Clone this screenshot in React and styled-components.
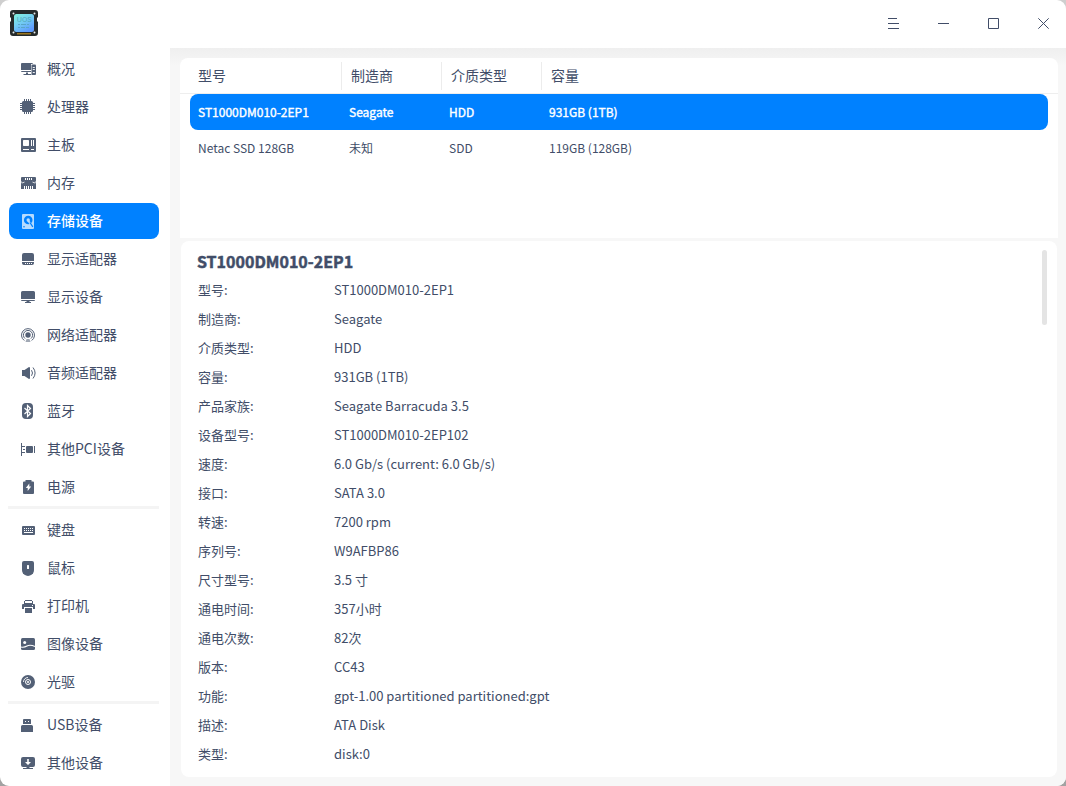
import React from 'react';
import styled, { createGlobalStyle, css } from 'styled-components';

const Global = createGlobalStyle`
  * { box-sizing: border-box; }
  html, body { margin: 0; padding: 0; }
  body {
    background: linear-gradient(#cfcfcf, #a2a2a2);
    font-family: "Noto Sans CJK SC", "Noto Sans", sans-serif;
    color: #414d68;
    overflow: hidden;
  }
`;

const Window = styled.div`
  width: 1066px;
  height: 786px;
  display: flex;
  flex-direction: column;
  background: #fff;
  border-radius: 9px;
  overflow: hidden;
`;

const TitleBar = styled.header`
  height: 48px;
  flex: none;
  display: flex;
  align-items: center;
  justify-content: space-between;
  padding: 0 16px 2px 8px;
`;

const Controls = styled.div`
  display: flex;
  gap: 37px;
`;

const ControlIcon = styled.svg`
  display: block;
  width: 13px;
  height: 13px;
  fill: none;
  stroke: #414d68;
  stroke-width: 1;
`;

const Body = styled.div`
  flex: 1;
  min-height: 0;
  display: flex;
`;

const Sidebar = styled.nav`
  width: 170px;
  flex: none;
  padding: 3px 11px 0 9px;
  display: flex;
  flex-direction: column;
  gap: 2px;
`;

const NavItem = styled.div`
  height: 36px;
  flex: none;
  display: flex;
  align-items: center;
  gap: 11px;
  padding-left: 11px;
  border-radius: 8px;
  font-size: 14px;
  line-height: 20px;
  white-space: nowrap;
  color: ${(p) => (p.$active ? '#fff' : '#414d68')};
  background: ${(p) => (p.$active ? '#0081ff' : 'transparent')};
  font-weight: ${(p) => (p.$active ? 500 : 400)};
`;

const NavLabel = styled.span`
  padding-bottom: 2px;
`;

const NavIcon = styled.svg`
  width: 16px;
  height: 16px;
  flex: none;
  --ink: ${(p) => (p.$active ? '#b5dbff' : '#536076')};
  --hole: ${(p) => (p.$active ? '#0081ff' : '#fff')};
  fill: var(--ink);
  .hole { fill: var(--hole); }
  .line { fill: none; stroke: var(--ink); }
  .cut { fill: none; stroke: var(--hole); }
`;

const Divider = styled.hr`
  width: 151px;
  height: 3px;
  flex: none;
  margin: -1px 0 1px -1px;
  border: 0;
  background: #f4f4f4;
`;

const Content = styled.main`
  flex: 1;
  min-width: 0;
  display: flex;
  flex-direction: column;
  gap: 3px;
  padding: 10px 8px 9px 10px;
  background: linear-gradient(#efefef, #f7f7f7 18px);
`;

const TableCard = styled.section`
  height: 180px;
  flex: none;
  background: #fff;
  border-radius: 8px 8px 0 0;
`;

const columns = css`
  display: grid;
  align-items: center;
`;

const HeadRow = styled.div`
  ${columns}
  grid-template-columns: 162px 100px 100px 1fr;
  height: 36px;
  border-bottom: 1px solid #eee;
`;

const HeadCell = styled.div`
  height: 28px;
  line-height: 26px;
  padding-left: ${(p) => (p.$first ? 18 : 9)}px;
  border-left: ${(p) => (p.$first ? 0 : 1)}px solid #ececec;
  margin-left: ${(p) => (p.$first ? 0 : -1)}px;
  font-size: 14px;
`;

const Row = styled.div`
  ${columns}
  grid-template-columns: 151px 100px 100px 1fr;
  height: 36px;
  margin: 0 10px;
  padding-left: 8px;
  border-radius: 8px;
  font-size: 12px;
  line-height: 18px;
  color: ${(p) => (p.$active ? '#fff' : '#414d68')};
  background: ${(p) => (p.$active ? '#0081ff' : 'transparent')};
  -webkit-text-stroke: ${(p) => (p.$active ? '0.4px #fff' : '0')};
`;

const DetailCard = styled.section`
  flex: 1;
  margin: 0 1px;
  padding: 9px 10px 0 16px;
  background: #fff;
  border-radius: 8px;
  display: flex;
  justify-content: space-between;
`;

const DetailTitle = styled.h1`
  margin: 0 0 3px;
  font-size: 16px;
  line-height: 22px;
  font-weight: 700;
  -webkit-text-stroke: 0.5px #414d68;
`;

const DetailList = styled.dl`
  margin: 0 0 0 1px;
`;

const DetailRow = styled.div`
  display: grid;
  grid-template-columns: 136px 1fr;
  height: 29px;
  font-size: 13px;
  line-height: 29px;
  white-space: nowrap;
`;

const Label = styled.dt``;

const Value = styled.dd`
  margin: 0;
`;

const ScrollThumb = styled.div`
  width: 5.5px;
  height: 75px;
  border-radius: 3px;
  background: #e4e4e4;
`;

const Logo = () => (
  <svg width="32" height="32" viewBox="0 0 32 32">
    <defs>
      <linearGradient id="chip" x1="0" y1="0" x2="0.6" y2="1">
        <stop offset="0" stopColor="#82f3dc" />
        <stop offset="0.5" stopColor="#74cff2" />
        <stop offset="1" stopColor="#5f9cff" />
      </linearGradient>
    </defs>
    <path d="M5 3h22q3 0 3 3v4l-1 1v3l1 1v11q0 3-3 3H5q-3 0-3-3V15l1-1v-3l-1-1V6q0-3 3-3z" fill="#252a2a" />
    <rect x="6" y="7" width="20" height="18" rx="2.5" fill="url(#chip)" />
    <rect x="9" y="26" width="14" height="1.500" fill="#9b7620" />
    <g fill="#e8eeee">
      <circle cx="5.5" cy="6.5" r="1" />
      <circle cx="26.5" cy="6.5" r="1" />
      <circle cx="5.5" cy="25.5" r="1" />
      <circle cx="26.5" cy="25.5" r="1" />
    </g>
    <text x="8.8" y="14.800" fontSize="6.400" textLength="15" lengthAdjust="spacingAndGlyphs" fill="#4fa5b5" fontFamily="Inter, sans-serif">UOS</text>
    <path d="M10 17.500h2m1 0h5m1 0h2M10 20.500h2m1 0h4m1 0h3" stroke="#58a6c9" strokeWidth="1" />
  </svg>
);

const glyphs = {
  overview: (
    <>
      <path d="M2 2h9.500q1.500 0 1.500 1h-2v6H1V3q0-1 1-1zM1 10h10v1H2q-1 0-1-1zM6 11.500h2V13h3v1H3.500v-1H6z" />
      <path d="M12.500 3.500h2.500q1 0 1 1V13q0 1-1 1h-3.500V4.500q0-1 1-1z" />
      <path className="cut" d="M12.800 6.500h2M12.800 8.500h2M12.800 11.500h2" strokeWidth=".9" />
    </>
  ),
  cpu: (
    <>
      <rect x="2" y="2" width="11" height="11" rx="1.5" />
      <path className="line" d="M4.5 0v15M6.5 0v15M8.5 0v15M10.5 0v15M0 4.5h15M0 6.5h15M0 8.5h15M0 10.5h15" />
    </>
  ),
  board: (
    <>
      <rect x="1" y="1" width="15" height="14" rx="1" />
      <rect className="hole" x="3" y="3" width="6" height="6" rx=".7" />
      <path className="cut" d="M11.5 3v6M13.5 3v6M3 12.5h6M11 12.5h3" />
    </>
  ),
  memory: (
    <>
      <path d="M2 2h13q1 0 1 1v3l-.5.5v1.500l.5.500V14H1V8.500l.5-.5V6.500L1 6V3q0-1 1-1z" />
      <path className="cut" d="M5.500 3v2M7.500 3v2M9.500 3v2M11.500 3v2M4.500 11v3M6.500 11v3M8.500 11v3M10.500 11v3M12.500 11v3" />
      <path className="cut" d="M2 8l2.500-.9M15 8l-2.500-.9" strokeWidth=".8" />
    </>
  ),
  disk: (
    <>
      <rect x="2" y="1" width="12" height="15" rx="1" />
      <circle className="hole" cx="8.200" cy="7" r="4.300" />
      <circle cx="8.200" cy="7" r="1.700" />
      <path d="M7.200 8l1.800-.7 4.500 6-1.500 1z" />
      <path className="cut" d="M10 9.500l2.800 4.300" strokeWidth="1.200" />
      <circle className="hole" cx="4" cy="13.700" r=".8" />
    </>
  ),
  gpu: (
    <>
      <path d="M4 2h8q2 0 2 2v6H2V4q0-2 2-2zM2 11h12v1q0 2-2 2H4q-2 0-2-2z" />
      <path className="cut" d="M5 12.500h1M7 12.500h1M9 12.500h1M11 12.500h1" />
    </>
  ),
  display: (
    <path d="M2.500 2h11Q15 2 15 3.500V10H1V3.500Q1 2 2.500 2zM1 11h14q0 1-1 1H9.500v1H11v1H5v-1h1.500v-1H2q-1 0-1-1z" />
  ),
  network: (
    <>
      <circle cx="8" cy="8" r="2.700" />
      <path className="line" d="M5.100 11.600a4.600 4.600 0 1 1 5.800 0M4.300 13.500a6.500 6.500 0 1 1 7.400 0" />
      <path d="M6.500 12h3l1 3h-5z" opacity=".55" />
    </>
  ),
  audio: (
    <>
      <path d="M2 5h2.500L9 2q1 0 1 1v10q0 1-1 1l-4.500-3H2z" />
      <path className="line" d="M11.500 5.200q2 2.800 0 5.600M13 2.500q4.200 5.500 0 11" />
    </>
  ),
  bluetooth: (
    <>
      <rect x="2" y="0" width="11" height="16" rx="4" />
      <path className="cut" d="M4.500 5l6 5.500-3 3v-11l3 3L4.500 11" strokeWidth="1.200" />
    </>
  ),
  pci: (
    <>
      <rect x="6" y="5" width="7" height="7" rx="1" />
      <path className="line" d="M1.500 2v13M14.500 5v7M2 5.500h3M3 8.500h2M2 11.500h3" />
    </>
  ),
  power: (
    <>
      <path d="M5.500 1h6v1.500H13q1 0 1 1V14q0 1-1 1H4q-1 0-1-1V3.500q0-1 1-1h1.500z" />
      <path className="hole" d="M9.300 4.500v3h1.900L7.700 12V9H5.800z" />
    </>
  ),
  keyboard: (
    <>
      <rect x="2" y="4" width="13" height="9" rx="1" />
      <path className="cut" d="M4 6.500h9M4 8.500h9" strokeDasharray="1 1" />
      <path className="cut" d="M4 10.500h9" />
    </>
  ),
  mouse: (
    <>
      <path d="M4 1h8q2 0 2 2v7q0 4-4 5.500L8 16l-2-.5Q2 14 2 10V3q0-2 2-2z" />
      <rect className="hole" x="7" y="5" width="2" height="4" rx=".5" />
    </>
  ),
  printer: (
    <>
      <path d="M5 2h7v1H5zM4 3h1v2h7V3h1v3H4z" />
      <path d="M3 6h11q1 0 1 1v4h-2V9H4v2H2V7q0-1 1-1zM5 10h7v5H5z" />
      <rect className="hole" x="12" y="7" width="1" height="1" />
    </>
  ),
  image: (
    <>
      <rect x="1" y="2" width="14" height="12" rx="1.500" />
      <circle className="hole" cx="4.700" cy="6.500" r="1.500" />
      <path className="cut" d="M1 11q3 .8 6-1t8 .5" strokeWidth="1.100" />
    </>
  ),
  optical: (
    <>
      <circle cx="8" cy="8" r="7" />
      <circle className="cut" cx="8" cy="8" r="2.500" />
      <circle className="hole" cx="8" cy="8" r="1" />
      <path className="cut" d="M3.500 8A4.500 4.500 0 0 1 8 3.500" strokeWidth=".9" />
    </>
  ),
  usb: (
    <>
      <path d="M4 2h6q1 0 1 1v4H3V3q0-1 1-1zM2.500 8h9Q13 8 13 9.500V15H1V9.500Q1 8 2.500 8z" />
      <path className="hole" d="M5 4h1v1H5zM8 4h1v1H8z" />
    </>
  ),
  other: (
    <>
      <path d="M3 2h10q2 0 2 2v6q0 2-2 2H9.500v1H13v1H3v-1h3.500v-1H3q-2 0-2-2V4q0-2 2-2z" />
      <path className="hole" d="M7.200 4h1.600v3H11l-3 3-3-3h2.200z" />
    </>
  ),
};

const groups = [
  [
    ['overview', '概况'],
    ['cpu', '处理器'],
    ['board', '主板'],
    ['memory', '内存'],
    ['disk', '存储设备'],
    ['gpu', '显示适配器'],
    ['display', '显示设备'],
    ['network', '网络适配器'],
    ['audio', '音频适配器'],
    ['bluetooth', '蓝牙'],
    ['pci', '其他PCI设备'],
    ['power', '电源'],
  ],
  [
    ['keyboard', '键盘'],
    ['mouse', '鼠标'],
    ['printer', '打印机'],
    ['image', '图像设备'],
    ['optical', '光驱'],
  ],
  [
    ['usb', 'USB设备'],
    ['other', '其他设备'],
  ],
];

const headings = ['型号', '制造商', '介质类型', '容量'];

const drives = [
  ['ST1000DM010-2EP1', 'Seagate', 'HDD', '931GB (1TB)'],
  ['Netac SSD 128GB', '未知', 'SDD', '119GB (128GB)'],
];

const details = [
  ['型号:', 'ST1000DM010-2EP1'],
  ['制造商:', 'Seagate'],
  ['介质类型:', 'HDD'],
  ['容量:', '931GB (1TB)'],
  ['产品家族:', 'Seagate Barracuda 3.5'],
  ['设备型号:', 'ST1000DM010-2EP102'],
  ['速度:', '6.0 Gb/s (current: 6.0 Gb/s)'],
  ['接口:', 'SATA 3.0'],
  ['转速:', '7200 rpm'],
  ['序列号:', 'W9AFBP86'],
  ['尺寸型号:', '3.5 寸'],
  ['通电时间:', '357小时'],
  ['通电次数:', '82次'],
  ['版本:', 'CC43'],
  ['功能:', 'gpt-1.00 partitioned partitioned:gpt'],
  ['描述:', 'ATA Disk'],
  ['类型:', 'disk:0'],
];

const controlPaths = [
  'M1 1.500h9M1 6.500h11M1 11.500h11',
  'M1 6.500h11',
  'M1.500 1.500h10v10h-10z',
  'M1.300 1.300l10.400 10.400M11.700 1.300L1.300 11.700',
];

export default function App() {
  return (
    <>
      <Global />
      <Window>
        <TitleBar>
          <Logo />
          <Controls>
            {controlPaths.map((d) => (
              <ControlIcon key={d} viewBox="0 0 13 13">
                <path d={d} />
              </ControlIcon>
            ))}
          </Controls>
        </TitleBar>
        <Body>
          <Sidebar>
            {groups.map((items, g) => (
              <React.Fragment key={g}>
                {g > 0 && <Divider />}
                {items.map(([icon, label]) => (
                  <NavItem key={icon} $active={icon === 'disk'}>
                    <NavIcon viewBox="0 0 16 16" $active={icon === 'disk'}>
                      {glyphs[icon]}
                    </NavIcon>
                    <NavLabel>{label}</NavLabel>
                  </NavItem>
                ))}
              </React.Fragment>
            ))}
          </Sidebar>
          <Content>
            <TableCard>
              <HeadRow>
                {headings.map((h, i) => (
                  <HeadCell key={h} $first={i === 0}>{h}</HeadCell>
                ))}
              </HeadRow>
              {drives.map((cells, i) => (
                <Row key={cells[0]} $active={i === 0}>
                  {cells.map((c) => <span key={c}>{c}</span>)}
                </Row>
              ))}
            </TableCard>
            <DetailCard>
              <div>
                <DetailTitle>ST1000DM010-2EP1</DetailTitle>
                <DetailList>
                  {details.map(([k, v]) => (
                    <DetailRow key={k}>
                      <Label>{k}</Label>
                      <Value>{v}</Value>
                    </DetailRow>
                  ))}
                </DetailList>
              </div>
              <ScrollThumb />
            </DetailCard>
          </Content>
        </Body>
      </Window>
    </>
  );
}
